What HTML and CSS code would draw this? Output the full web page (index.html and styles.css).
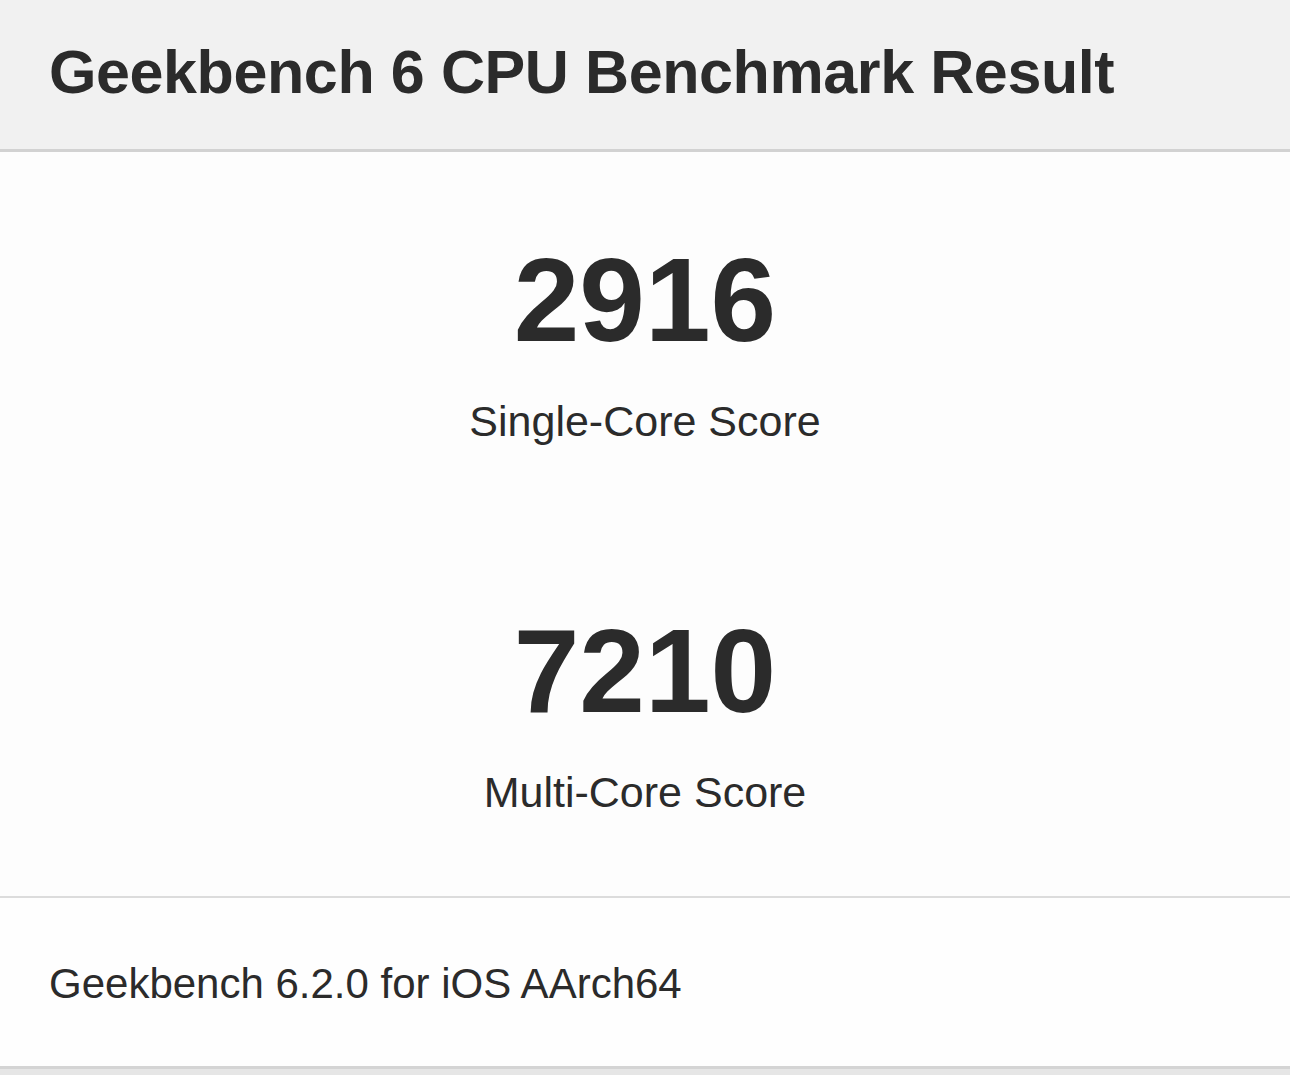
FILE: index.html
```html
<!DOCTYPE html>
<html lang="en">
<head>
<meta charset="utf-8">
<title>Geekbench 6 CPU Benchmark Result</title>
<link rel="stylesheet" href="styles.css">
</head>
<body>
<div class="page">
  <header class="head">
    <h1 class="title">Geekbench 6 CPU Benchmark Result</h1>
  </header>
  <section class="scores">
    <div class="score">
      <div class="value">2916</div>
      <div class="label">Single-Core Score</div>
    </div>
    <div class="score">
      <div class="value">7210</div>
      <div class="label">Multi-Core Score</div>
    </div>
  </section>
  <footer class="foot">
    <div class="version">Geekbench 6.2.0 for iOS AArch64</div>
  </footer>
</div>
</body>
</html>
```
FILE: styles.css
```css
html, body {
  margin: 0;
  padding: 0;
  background: #e6e6e6;
}

.page {
  font-family: "Liberation Sans", Arial, Helvetica, sans-serif;
  color: #2b2b2b;
  width: 1290px;
}

.head {
  height: 149px;
  background: #f1f1f1;
  border-bottom: 3px solid #d2d2d2;
  display: flex;
  align-items: center;
  padding: 0 49px;
  box-sizing: content-box;
}

.title {
  margin: 0;
  font-size: 61px;
  font-weight: bold;
  letter-spacing: -0.4px;
  line-height: 1;
  padding-bottom: 5px;
}

.scores {
  background: #fdfdfd;
  height: 746px;
  border-bottom: 2px solid #dcdcdc;
  display: flex;
  flex-direction: column;
  align-items: center;
  padding-top: 78px;
  box-sizing: border-box;
  gap: 155px;
}

.score {
  display: flex;
  flex-direction: column;
  align-items: center;
}

.value {
  font-size: 118px;
  font-weight: bold;
  line-height: 140px;
}

.label {
  font-size: 43px;
  line-height: 50px;
  margin-top: 26px;
}

.foot {
  background: #fefefe;
  height: 168px;
  border-bottom: 3px solid #d4d4d4;
  display: flex;
  align-items: center;
  padding: 0 49px;
}

.version {
  font-size: 42px;
  line-height: 1;
  padding-top: 4px;
}
```
